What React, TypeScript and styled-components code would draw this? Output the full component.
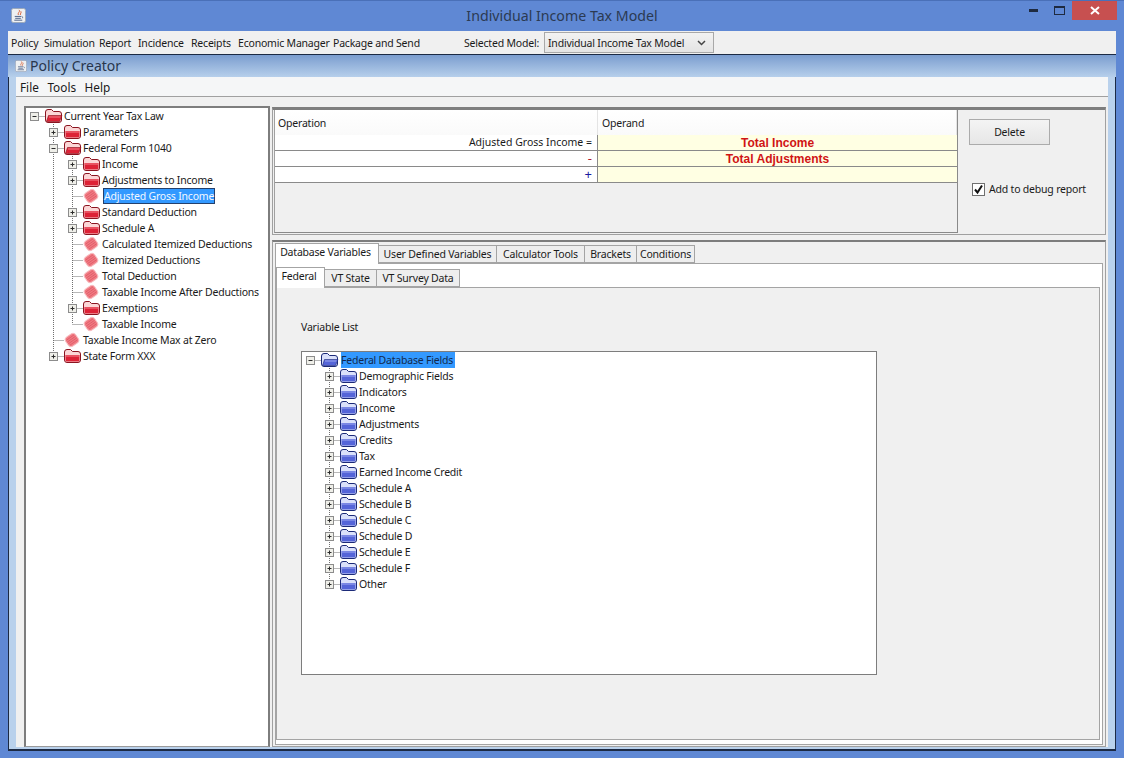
import styled, { createGlobalStyle } from 'styled-components'

const UI_FONT = '"Noto Sans", "Liberation Sans", sans-serif'

const GlobalStyle = createGlobalStyle`
  html, body {
    margin: 0;
    padding: 0;
    background: #5f88d4;
  }
  * {
    box-sizing: border-box;
  }
`

const Window = styled.div`
  width: 1124px;
  height: 758px;
  display: flex;
  flex-direction: column;
  overflow: hidden;
  padding: 0 8px 7px;
  background: #5f88d4;
  color: #1a1a1a;
  font: 10.5px/16px ${UI_FONT};
  letter-spacing: -0.2px;
  border-top: 1px solid #4a70b8;
`

const TitleBar = styled.div`
  height: 30px;
  flex: none;
  display: grid;
  grid-template-columns: 1fr auto 1fr;
  align-items: start;
`

const AppIcon = styled.div`
  margin: 7px 0 0 3px;
  height: 16px;
`

const TitleText = styled.div`
  font-size: 14.2px;
  line-height: 30px;
  letter-spacing: 0;
  color: #2b3a52;
`

const WindowButtons = styled.div`
  display: flex;
  justify-content: flex-end;
  align-items: flex-start;
  margin-right: -1px;
`

const ControlButton = styled.div<{ $w: number }>`
  width: ${({ $w }) => $w}px;
  height: 19px;
  display: flex;
  align-items: center;
  justify-content: center;
`

const CloseButton = styled(ControlButton)`
  background: #c75050;
`

const MenuBar = styled.div`
  height: 24px;
  flex: none;
  display: flex;
  align-items: center;
  padding: 0 0 0 3px;
  background: #f0f0f0;
  border-bottom: 1px solid #1c2a44;
`

const MenuItem = styled.span<{ $w: number }>`
  width: ${({ $w }) => $w}px;
  flex: none;
  white-space: nowrap;
`

const ModelLabel = styled.span`
  margin-left: 42px;
  width: 80px;
  flex: none;
  white-space: nowrap;
`

const ModelSelect = styled.div`
  width: 170px;
  height: 21px;
  display: flex;
  align-items: center;
  justify-content: space-between;
  padding: 0 7px 0 3px;
  background: linear-gradient(#f2f2f2, #e4e4e4);
  border: 1px solid #a8a8a8;
`

const InternalFrame = styled.div`
  flex: 1;
  min-height: 0;
  display: flex;
  flex-direction: column;
`

const FrameTitle = styled.div`
  height: 22px;
  flex: none;
  display: flex;
  align-items: center;
  gap: 3px;
  padding-left: 7px;
  font-size: 14px;
  letter-spacing: 0;
  color: #28364c;
  background: linear-gradient(#7b9dcf, #b6cfeb);
`

const FrameBody = styled.div`
  flex: 1;
  min-height: 0;
  display: flex;
  flex-direction: column;
  padding: 0 7px 2px;
  background: #b9d1ec;
  border-left: 1px solid #1c2a44;
  border-right: 1px solid #1c2a44;
  border-bottom: 2px solid #1c2a44;
`

const FrameMenu = styled.div`
  height: 20px;
  flex: none;
  display: flex;
  align-items: center;
  gap: 8.5px;
  padding-left: 4px;
  font-size: 11.8px;
  letter-spacing: 0;
  background: #f5f6f7;
  border-bottom: 1px solid #a0a0a0;
`

const SplitPane = styled.div`
  flex: 1;
  min-height: 0;
  display: flex;
  gap: 2px;
  padding: 9px 2px 0 8px;
  background: #f0f0f0;
`

const LeftTree = styled.div`
  width: 246px;
  flex: none;
  background: #fff;
  border-top: 2px solid #7d7d7d;
  border-left: 2px solid #7d7d7d;
  border-right: 2px solid #7d7d7d;
  border-bottom: 1px solid #9a9a9a;
`

const RightColumn = styled.div`
  flex: 1;
  min-width: 0;
  margin-top: 1px;
  display: flex;
  flex-direction: column;
  gap: 5px;
`

const TopPanel = styled.div`
  height: 128px;
  flex: none;
  display: flex;
  padding: 0 0 1px 1px;
  border-top: 3px solid #7d7d7d;
  border-left: 1px solid #a0a0a0;
  border-right: 1px solid #a0a0a0;
  border-bottom: 1px solid #a0a0a0;
`

const TablePane = styled.div`
  width: 684px;
  flex: none;
  border-right: 1px solid #8a8a8a;
  border-bottom: 1px solid #8a8a8a;
  border-left: 1px solid #a0a0a0;
`

const TableRow = styled.div<{ $header?: boolean }>`
  display: grid;
  grid-template-columns: 323px 1fr;
  grid-template-rows: minmax(0, 1fr);
  height: ${({ $header }) => ($header ? 25 : 16)}px;
  background: #fff;
  border-bottom: ${({ $header }) => ($header ? 'none' : '1px solid #8a8a8a')};
`

const HeaderCell = styled.div<{ $inset: number }>`
  display: flex;
  align-items: center;
  padding-left: ${({ $inset }) => $inset}px;
  background: linear-gradient(#fff, #fafafa);
  border-right: 1px solid #e4e4e4;
`

const OperationCell = styled.div<{ $color?: string }>`
  min-height: 0;
  text-align: right;
  padding-right: 5px;
  letter-spacing: 0;
  font-size: ${({ $color }) => ($color ? 13 : 10.5)}px;
  line-height: 15px;
  color: ${({ $color }) => $color ?? '#1a1a1a'};
  border-right: 1px solid #8a8a8a;
`

const OperandCell = styled.div`
  min-height: 0;
  text-align: center;
  background: #ffffe3;
  color: #d01414;
  letter-spacing: 0;
  font: bold 12px/17px "Liberation Sans", Arial, sans-serif;
`

const SidePane = styled.div`
  flex: 1;
  display: flex;
  flex-direction: column;
  align-items: flex-start;
  padding: 9px 0 0 11px;
`

const DeleteButton = styled.button`
  width: 81px;
  height: 26px;
  padding: 0;
  font: inherit;
  letter-spacing: inherit;
  color: #1a1a1a;
  background: linear-gradient(#f4f4f4, #e6e6e6);
  border: 1px solid #ababab;
`

const CheckRow = styled.label`
  display: flex;
  align-items: center;
  gap: 4px;
  margin: 36px 0 0 3px;
`

const CheckBox = styled.span`
  width: 13px;
  height: 13px;
  display: flex;
  align-items: center;
  justify-content: center;
  background: #fff;
  border: 1px solid #707070;
`

const BottomPanel = styled.div`
  flex: 1;
  min-height: 0;
  display: flex;
  flex-direction: column;
  padding: 1px 2px 1px;
  border-top: 2px solid #7d7d7d;
  border-left: 1px solid #a0a0a0;
  border-right: 1px solid #a0a0a0;
  border-bottom: 1px solid #a0a0a0;
`

const TabStrip = styled.div`
  display: flex;
  align-items: flex-end;
  flex: none;
`

const Tab = styled.div<{ $w: number; $active?: boolean }>`
  position: relative;
  z-index: 1;
  width: ${({ $w }) => $w}px;
  height: ${({ $active }) => ($active ? 21 : 18)}px;
  margin-bottom: ${({ $active }) => ($active ? -1 : 0)}px;
  display: flex;
  align-items: center;
  justify-content: center;
  white-space: nowrap;
  padding: 0 ${({ $active }) => ($active ? 3 : 0)}px ${({ $active }) => ($active ? 4 : 0)}px 0;
  background: ${({ $active }) => ($active ? '#fff' : '#eeeeee')};
  border: 1px solid #a4a4a4;
  border-left-width: ${({ $active }) => ($active ? 1 : 0)}px;
  border-bottom: ${({ $active }) => ($active ? 'none' : '1px solid #a4a4a4')};
`

const TabBody = styled.div`
  flex: 1;
  min-height: 0;
  display: flex;
  flex-direction: column;
  padding: 3px 2px 4px 0;
  background: #fff;
  border: 1px solid #a4a4a4;
`

const ContentPanel = styled.div`
  flex: 1;
  min-height: 0;
  padding: 31px 0 0 24px;
  background: #f0f0f0;
  border: 1px solid #a4a4a4;
`

const ListLabel = styled.div`
  height: 16px;
  margin-bottom: 16px;
`

const VariableTree = styled.div`
  width: 576px;
  height: 324px;
  background: #fff;
  border: 1px solid #7d7d7d;
`

const TreeRowLine = styled.div`
  height: 16px;
  display: flex;
  white-space: nowrap;
`

const TreeSvg = styled.svg`
  display: block;
  flex: none;
`

const TreeLabel = styled.span<{ $selected?: 'focus' | 'idle' }>`
  margin-left: ${({ $selected }) => ($selected ? 1 : 0)}px;
  padding-right: ${({ $selected }) => ($selected === 'idle' ? 2 : 0)}px;
  line-height: ${({ $selected }) => ($selected === 'focus' ? 14 : 16)}px;
  background: ${({ $selected }) => ($selected ? '#3399ff' : 'transparent')};
  color: ${({ $selected }) =>
    $selected === 'focus' ? '#f2f8ff' : $selected === 'idle' ? '#12294d' : '#1a1a1a'};
  border: ${({ $selected }) => ($selected === 'focus' ? '1px solid #24406c' : 'none')};
`

type NodeKind = 'open' | 'closed' | 'leaf'

interface TreeNode {
  label: string
  depth: number
  kind: NodeKind
  last?: boolean
  selected?: 'focus' | 'idle'
}

const POLICY_NODES: TreeNode[] = [
  { label: 'Current Year Tax Law', depth: 0, kind: 'open' },
  { label: 'Parameters', depth: 1, kind: 'closed' },
  { label: 'Federal Form 1040', depth: 1, kind: 'open' },
  { label: 'Income', depth: 2, kind: 'closed' },
  { label: 'Adjustments to Income', depth: 2, kind: 'closed' },
  { label: 'Adjusted Gross Income', depth: 2, kind: 'leaf', selected: 'focus' },
  { label: 'Standard Deduction', depth: 2, kind: 'closed' },
  { label: 'Schedule A', depth: 2, kind: 'closed' },
  { label: 'Calculated Itemized Deductions', depth: 2, kind: 'leaf' },
  { label: 'Itemized Deductions', depth: 2, kind: 'leaf' },
  { label: 'Total Deduction', depth: 2, kind: 'leaf' },
  { label: 'Taxable Income After Deductions', depth: 2, kind: 'leaf' },
  { label: 'Exemptions', depth: 2, kind: 'closed' },
  { label: 'Taxable Income', depth: 2, kind: 'leaf', last: true },
  { label: 'Taxable Income Max at Zero', depth: 1, kind: 'leaf' },
  { label: 'State Form XXX', depth: 1, kind: 'closed', last: true },
]

const FIELD_GROUPS = [
  'Demographic Fields',
  'Indicators',
  'Income',
  'Adjustments',
  'Credits',
  'Tax',
  'Earned Income Credit',
  'Schedule A',
  'Schedule B',
  'Schedule C',
  'Schedule D',
  'Schedule E',
  'Schedule F',
  'Other',
]

const FIELD_NODES: TreeNode[] = [
  { label: 'Federal Database Fields', depth: 0, kind: 'open', selected: 'idle' },
  ...FIELD_GROUPS.map((label, i) => ({
    label,
    depth: 1,
    kind: 'closed' as NodeKind,
    last: i === FIELD_GROUPS.length - 1,
  })),
]

const RED = { dark: '#8a1420', back: '#fbd6d6', front: '#dd2236', shine: '#f4808a' }
const BLUE = { dark: '#1c2a78', back: '#dae0fa', front: '#5565d8', shine: '#a0aaf0' }

function Folder({ open, palette }: { open: boolean; palette: typeof RED }) {
  return (
    <TreeSvg width="19" height="16" viewBox="0 0 19 16">
      <path
        d="M0.5 4 Q0.5 1.5 3 1.5 H6.5 L8.5 3.5 H14 Q16.5 3.5 16.5 6 V12 Q16.5 14.5 14 14.5 H3 Q0.5 14.5 0.5 12 Z"
        fill={palette.back}
        stroke={palette.dark}
      />
      {open ? (
        <path d="M1.5 13.5 L3.5 7.5 H17 L14.5 13.5 Z" fill={palette.front} stroke={palette.dark} strokeWidth="0.6" />
      ) : (
        <path d="M1.5 7 H15.5 V12 Q15.5 13.5 14 13.5 H3 Q1.5 13.5 1.5 12 Z" fill={palette.front} />
      )}
      <path d={open ? 'M4 9 H15.5' : 'M2 8 H15'} stroke={palette.shine} />
    </TreeSvg>
  )
}

function LeafIcon() {
  return (
    <TreeSvg width="19" height="16" viewBox="0 0 19 16">
      <g transform="rotate(-35 8 8)">
        <rect x="2" y="2.5" width="12" height="11" rx="3.5" fill="#f07a82" stroke="#f7bcc0" />
        <path d="M3.5 5 H12.5 M3 7 H13 M3 9 H13 M3.5 11 H12.5" stroke="#d9505e" strokeWidth="0.6" />
      </g>
    </TreeSvg>
  )
}

function Guide({ visible }: { visible: boolean }) {
  return (
    <TreeSvg width="19" height="16" viewBox="0 0 19 16">
      {visible && <path d="M8.5 0 V16" stroke="#707070" strokeDasharray="1 1" />}
    </TreeSvg>
  )
}

function Branch({ node }: { node: TreeNode }) {
  const hasBox = node.kind !== 'leaf'
  return (
    <TreeSvg width="19" height="16" viewBox="0 0 19 16">
      {node.depth > 0 && (
        <path d={node.last ? 'M8.5 0 V8' : 'M8.5 0 V16'} stroke="#707070" strokeDasharray="1 1" />
      )}
      <path d="M8.5 8.5 H19" stroke="#707070" strokeDasharray="1 1" />
      {hasBox && (
        <>
          <rect x="4.5" y="4.5" width="8" height="8" fill="#efefe9" stroke="#8c8c8c" />
          <path d="M6.5 8.5 H10.5" stroke="#2b2b2b" />
          {node.kind === 'closed' && <path d="M8.5 6.5 V10.5" stroke="#2b2b2b" />}
        </>
      )}
    </TreeSvg>
  )
}

function Tree({ nodes, palette }: { nodes: TreeNode[]; palette: typeof RED }) {
  return (
    <>
      {nodes.map((node) => (
        <TreeRowLine key={node.label + node.depth}>
          {node.depth > 0 && <Guide visible={false} />}
          {node.depth > 1 && <Guide visible />}
          <Branch node={node} />
          {node.kind === 'leaf' ? <LeafIcon /> : <Folder open={node.kind === 'open'} palette={palette} />}
          <TreeLabel $selected={node.selected}>{node.label}</TreeLabel>
        </TreeRowLine>
      ))}
    </>
  )
}

function JavaIcon({ size }: { size: number }) {
  return (
    <svg width={size} height={size} viewBox="0 0 16 16" style={{ display: 'block' }}>
      <rect x="0.5" y="0.5" width="15" height="15" rx="2" fill="#eef0f2" stroke="#9aa6b8" />
      <path d="M8.5 2 C10.5 4 6.5 5 8 7.5 M10.5 3.5 C11.5 5 9.5 6 10 7.5" fill="none" stroke="#d8582a" strokeWidth="1" />
      <path d="M4 9 H11 M4.5 11 H10.5 M3.5 13 H12" stroke="#4c5f84" strokeWidth="1" />
      <path d="M11.5 9 Q13.5 9.5 12 11" fill="none" stroke="#4c5f84" strokeWidth="0.8" />
    </svg>
  )
}

const MENU_ITEMS: [string, number][] = [
  ['Policy', 33],
  ['Simulation', 55],
  ['Report', 39],
  ['Incidence', 53],
  ['Receipts', 47],
  ['Economic Manager', 95],
  ['Package and Send', 89],
]

const TABLE_ROWS = [
  { op: 'Adjusted Gross Income =', operand: 'Total Income' },
  { op: '-', operand: 'Total Adjustments', color: '#b02030' },
  { op: '+', operand: '', color: '#1a1aa0' },
]

const MAIN_TABS: [string, number][] = [
  ['Database Variables', 104],
  ['User Defined Variables', 118],
  ['Calculator Tools', 88],
  ['Brackets', 52],
  ['Conditions', 58],
]

const SUB_TABS: [string, number][] = [
  ['Federal', 49],
  ['VT State', 52],
  ['VT Survey Data', 83],
]

export default function App() {
  return (
    <Window>
      <GlobalStyle />
      <TitleBar>
        <AppIcon>
          <JavaIcon size={15} />
        </AppIcon>
        <TitleText>Individual Income Tax Model</TitleText>
        <WindowButtons>
          <ControlButton $w={26}>
            <svg width="9" height="3" viewBox="0 0 9 3">
              <rect width="9" height="3" fill="#1e2a40" />
            </svg>
          </ControlButton>
          <ControlButton $w={26}>
            <svg width="11" height="9" viewBox="0 0 11 9">
              <rect x="0.5" y="1" width="10" height="7.5" fill="none" stroke="#1e2a40" />
              <rect width="11" height="2" fill="#1e2a40" />
            </svg>
          </ControlButton>
          <CloseButton $w={45}>
            <svg width="10" height="9" viewBox="0 0 10 9">
              <path d="M1 1 L9 8 M9 1 L1 8" stroke="#fff" strokeWidth="2" />
            </svg>
          </CloseButton>
        </WindowButtons>
      </TitleBar>
      <MenuBar>
        {MENU_ITEMS.map(([label, w]) => (
          <MenuItem key={label} $w={w}>
            {label}
          </MenuItem>
        ))}
        <ModelLabel>Selected Model:</ModelLabel>
        <ModelSelect>
          <span>Individual Income Tax Model</span>
          <svg width="9" height="6" viewBox="0 0 9 6">
            <path d="M1 1 L4.5 4.5 L8 1" fill="none" stroke="#444" strokeWidth="1.5" />
          </svg>
        </ModelSelect>
      </MenuBar>
      <InternalFrame>
        <FrameTitle>
          <JavaIcon size={12} />
          Policy Creator
        </FrameTitle>
        <FrameBody>
          <FrameMenu>
            <span>File</span>
            <span>Tools</span>
            <span>Help</span>
          </FrameMenu>
          <SplitPane>
            <LeftTree>
              <Tree nodes={POLICY_NODES} palette={RED} />
            </LeftTree>
            <RightColumn>
              <TopPanel>
                <TablePane>
                  <TableRow $header>
                    <HeaderCell $inset={3}>Operation</HeaderCell>
                    <HeaderCell $inset={4}>Operand</HeaderCell>
                  </TableRow>
                  {TABLE_ROWS.map((row) => (
                    <TableRow key={row.op}>
                      <OperationCell $color={row.color}>{row.op}</OperationCell>
                      <OperandCell>{row.operand}</OperandCell>
                    </TableRow>
                  ))}
                </TablePane>
                <SidePane>
                  <DeleteButton>Delete</DeleteButton>
                  <CheckRow>
                    <CheckBox>
                      <svg width="11" height="11" viewBox="0 0 11 11">
                        <path d="M2 5.5 L4.5 8.5 L9 1.5" fill="none" stroke="#111" strokeWidth="2" />
                      </svg>
                    </CheckBox>
                    Add to debug report
                  </CheckRow>
                </SidePane>
              </TopPanel>
              <BottomPanel>
                <TabStrip>
                  {MAIN_TABS.map(([label, w], i) => (
                    <Tab key={label} $w={w} $active={i === 0}>
                      {label}
                    </Tab>
                  ))}
                </TabStrip>
                <TabBody>
                  <TabStrip>
                    {SUB_TABS.map(([label, w], i) => (
                      <Tab key={label} $w={w} $active={i === 0}>
                        {label}
                      </Tab>
                    ))}
                  </TabStrip>
                  <ContentPanel>
                    <ListLabel>Variable List</ListLabel>
                    <VariableTree>
                      <Tree nodes={FIELD_NODES} palette={BLUE} />
                    </VariableTree>
                  </ContentPanel>
                </TabBody>
              </BottomPanel>
            </RightColumn>
          </SplitPane>
        </FrameBody>
      </InternalFrame>
    </Window>
  )
}
